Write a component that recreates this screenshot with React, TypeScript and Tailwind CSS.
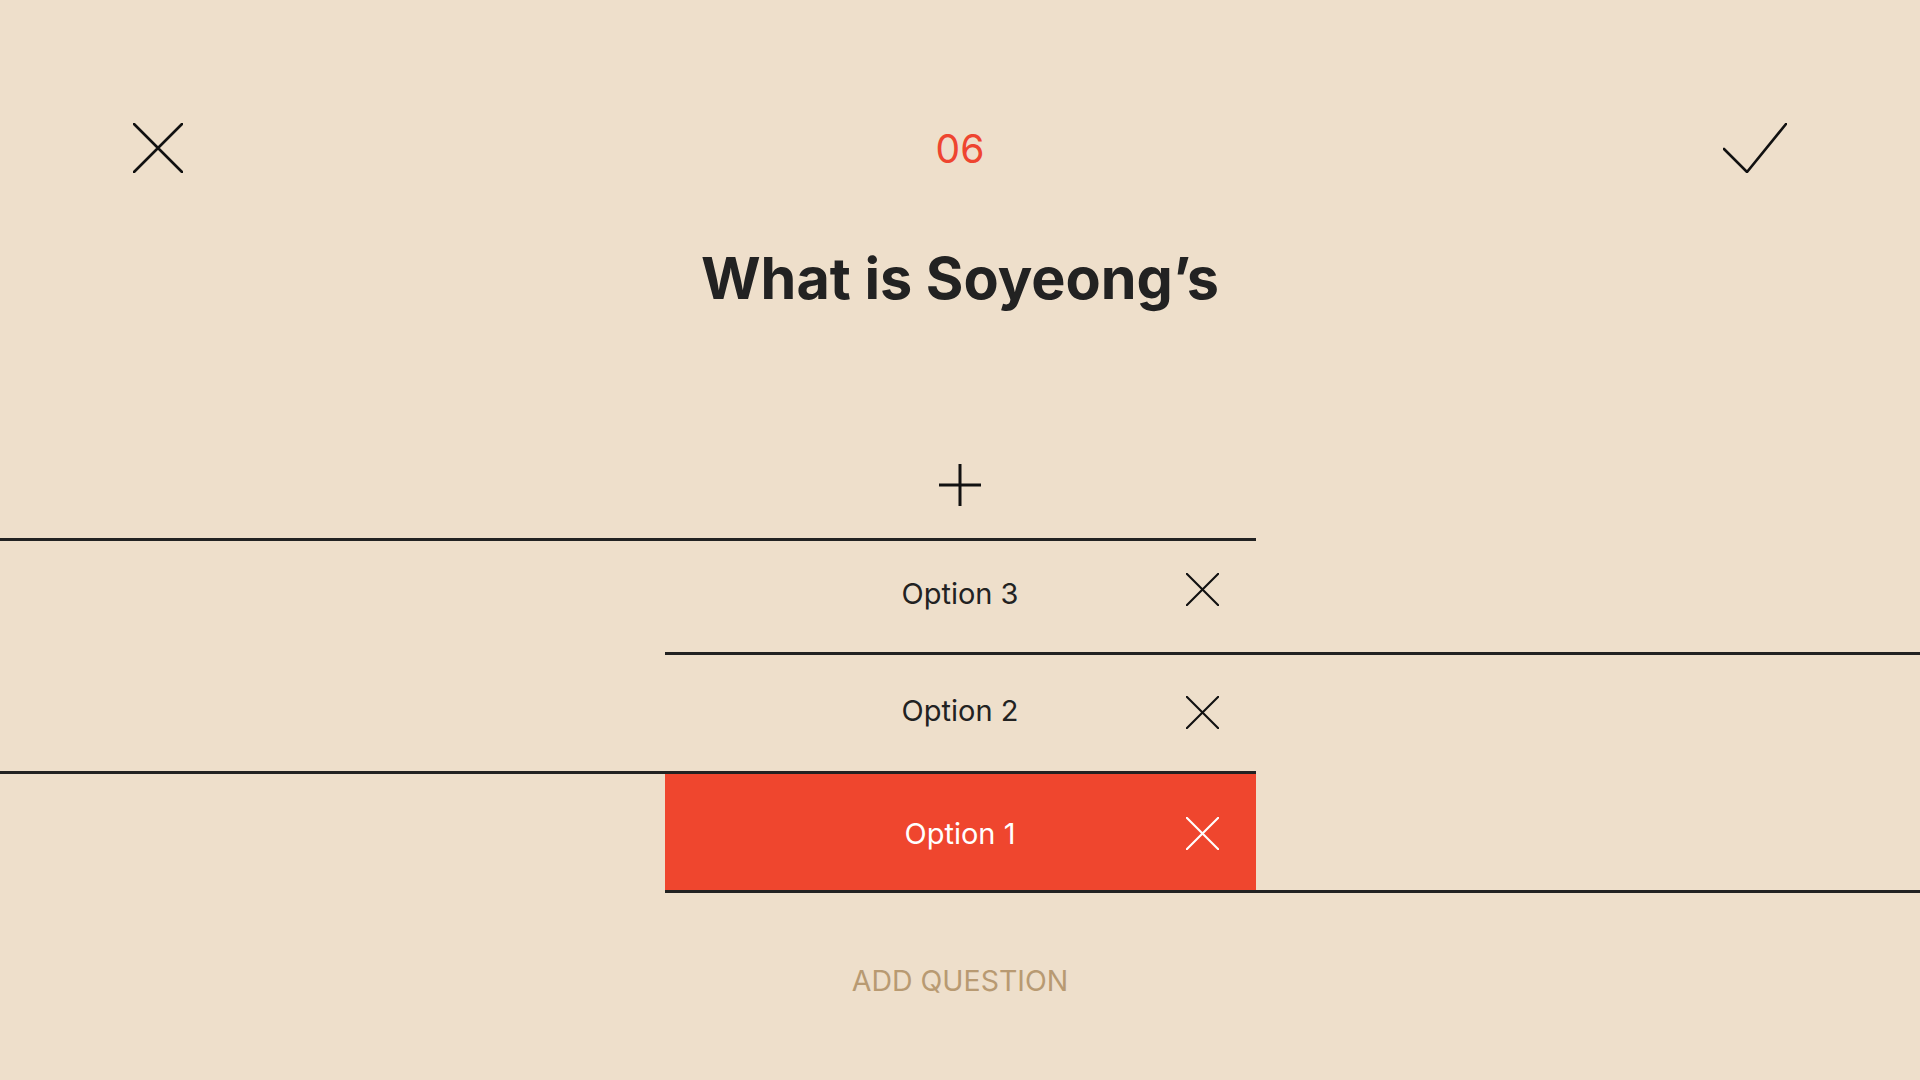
import React from "react";

// ---------------- ICONS ----------------
function IconClose({ size, stroke, color }: { size: number; stroke: number; color: string }) {
  return (
    <svg width={size} height={size} viewBox="0 0 50 50" fill="none" stroke={color}>
      <path strokeWidth={stroke} strokeLinecap="round" d="M1 1L49 49M49 1L1 49" />
    </svg>
  );
}

function IconCheck() {
  return (
    <svg width={64} height={50} viewBox="0 0 64 50" fill="none" stroke="#111">
      <path strokeWidth={2.6} strokeLinecap="round" strokeLinejoin="miter" d="M1 26L24 49L63 1" />
    </svg>
  );
}

function IconPlus() {
  return (
    <svg width={42} height={42} viewBox="0 0 42 42" fill="none" stroke="#111">
      <path strokeWidth={3} d="M21 0V42M0 21H42" />
    </svg>
  );
}

// ---------------- OPTION ROWS ----------------
interface Option {
  label: string;
  active?: boolean;
  h: string;
  iconShift?: string;
}

const options: Option[] = [
  { label: "Option 3", h: "h-[111px] pb-[5px]", iconShift: "-mt-[8px]" },
  { label: "Option 2", h: "h-[116px] pb-[5px]", iconShift: "mt-[5px]" },
  { label: "Option 1", active: true, h: "h-[116px] pt-[3px]" },
];

function Rule({ side }: { side: "left" | "right" }) {
  return (
    <div className="grid grid-cols-[1fr_591px_1fr]">
      <div className={"h-[3px] bg-[#222] " + (side === "left" ? "col-span-2" : "col-start-2 col-span-2")} />
    </div>
  );
}

function OptionRow({ opt }: { opt: Option }) {
  return (
    <div className="grid grid-cols-[1fr_591px_1fr]">
      <div
        className={
          "col-start-2 grid grid-cols-[1fr_auto_1fr] items-center " +
          opt.h +
          (opt.active ? " bg-[#ef462e] text-white" : " text-[#222]")
        }
      >
        <div />
        <span className="text-[29px] leading-none">{opt.label}</span>
        <div className={"flex justify-end pr-[37px] " + (opt.iconShift ?? "")}>
          <IconClose size={33} stroke={3.2} color={opt.active ? "#fff" : "#111"} />
        </div>
      </div>
    </div>
  );
}

// ========== QUESTION EDITOR ==========
export default function App() {
  return (
    <div
      className="min-h-screen w-full bg-[#eedfcb] flex flex-col overflow-hidden"
      style={{ fontFamily: "Inter, 'Noto Sans', sans-serif" }}
    >
      {/* HEADER */}
      <div className="pt-[123px] px-[133px] grid grid-cols-[1fr_auto_1fr] items-center">
        <div className="flex">
          <IconClose size={50} stroke={2.6} color="#111" />
        </div>
        <div className="text-[39px] leading-none text-[#ee4530]">06</div>
        <div className="flex justify-end">
          <IconCheck />
        </div>
      </div>

      {/* QUESTION */}
      <h1 className="mt-[77px] text-center text-[57.5px] leading-none font-bold text-[#222]">
        What is Soyeong’s
      </h1>

      <div className="mt-[156px] flex justify-center">
        <IconPlus />
      </div>

      {/* OPTIONS */}
      <div className="mt-[32px] flex flex-col">
        <Rule side="left" />
        <OptionRow opt={options[0]} />
        <Rule side="right" />
        <OptionRow opt={options[1]} />
        <Rule side="left" />
        <OptionRow opt={options[2]} />
        <Rule side="right" />
      </div>

      <div className="mt-[74px] text-center text-[28.5px] leading-none text-[#b89a72]">ADD QUESTION</div>
    </div>
  );
}
